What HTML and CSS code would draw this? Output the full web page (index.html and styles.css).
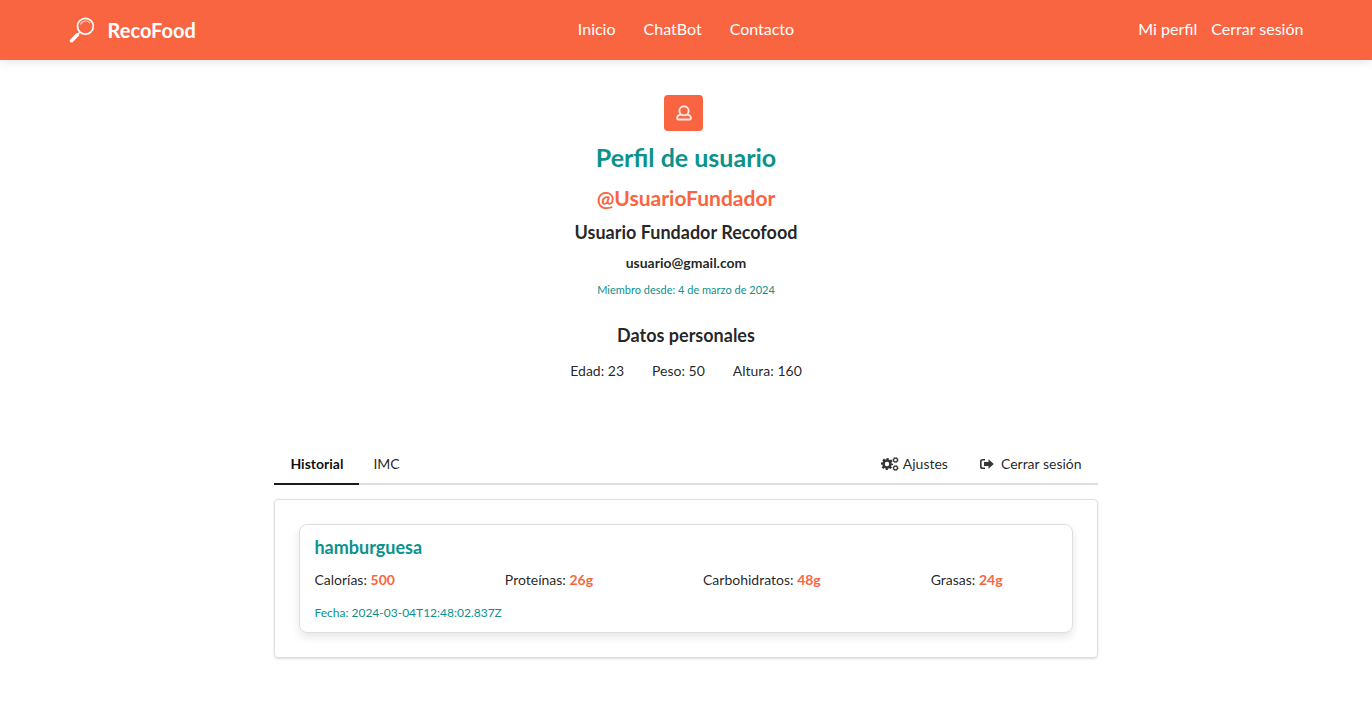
FILE: index.html
```html
<!DOCTYPE html>
<html lang="es">
<head>
<meta charset="utf-8">
<meta name="viewport" content="width=device-width, initial-scale=1">
<title>RecoFood</title>
<link rel="stylesheet" href="styles.css">
</head>
<body>
<header class="topbar">
  <a class="brand" href="#">
    <svg class="brand-icon" viewBox="0 0 26 26" fill="none" stroke="currentColor" aria-hidden="true">
      <circle cx="16.4" cy="9.3" r="7.900" stroke-width="1.700"/>
      <path d="M11.400 7.500a5.600 5.600 0 0 1 9.600-1.300" stroke-width="1.200" opacity=".7"/>
      <path d="M10.800 15.300L8.800 17.300" stroke-width="1.600"/>
      <path d="M8.300 17.800L2.600 23.700" stroke-width="3.600" stroke-linecap="round"/>
    </svg>
    <span>RecoFood</span>
  </a>
  <nav class="main-nav">
    <a href="#">Inicio</a>
    <a href="#">ChatBot</a>
    <a href="#">Contacto</a>
  </nav>
  <nav class="user-nav">
    <a href="#">Mi perfil</a>
    <a href="#">Cerrar sesión</a>
  </nav>
</header>
<main>
  <section class="profile">
    <button class="avatar" type="button" aria-label="Usuario">
      <svg viewBox="0 0 16 16" fill="none" stroke="currentColor" stroke-width="1.9" aria-hidden="true">
        <circle cx="8" cy="5.8" r="4.6"/>
        <path d="M4.8 9.6C2.4 10 1.1 11.2 1.1 13c0 1 .6 1.5 1.6 1.5h10.6c1 0 1.600-.5 1.600-1.500 0-1.800-1.300-3-3.700-3.400"/>
      </svg>
    </button>
    <h1 class="title">Perfil de usuario</h1>
    <h2 class="handle">@UsuarioFundador</h2>
    <h3 class="name">Usuario Fundador Recofood</h3>
    <h4 class="email">usuario@gmail.com</h4>
    <p class="since">Miembro desde: 4 de marzo de 2024</p>
    <h3 class="data-title">Datos personales</h3>
    <div class="data">
      <span>Edad: 23</span>
      <span>Peso: 50</span>
      <span>Altura: 160</span>
    </div>
  </section>
  <section class="panel">
    <nav class="tabs">
      <a class="tab active" href="#">Historial</a>
      <a class="tab" href="#">IMC</a>
      <a class="tab settings" href="#">
        <svg class="cogs" viewBox="0 0 18 14" fill="none" stroke="currentColor" aria-hidden="true">
          <circle cx="6" cy="7" r="3.500" stroke-width="2.600"/>
          <circle cx="6" cy="7" r="5.200" stroke-width="1.800" stroke-dasharray="2.200 1.884" stroke-dashoffset="1.100"/>
          <circle cx="14.500" cy="3" r="1.900" stroke-width="1.200"/>
          <circle cx="14.500" cy="3" r="2.700" stroke-width=".7" stroke-dasharray="1.100 1.020"/>
          <circle cx="14.500" cy="11" r="1.900" stroke-width="1.200"/>
          <circle cx="14.500" cy="11" r="2.700" stroke-width=".7" stroke-dasharray="1.100 1.020"/>
        </svg>
        Ajustes
      </a>
      <a class="tab logout" href="#">
        <svg class="exit" viewBox="0 0 14 14" fill="currentColor" aria-hidden="true">
          <path d="M5 2H2.600A2.600 2.600 0 0 0 0 4.600v4.800A2.600 2.600 0 0 0 2.600 12H5v-1.500H2.800A1.200 1.200 0 0 1 1.600 9.300V4.700a1.200 1.200 0 0 1 1.200-1.200H5z"/>
          <path d="M8.500 2.200L13.800 7l-5.300 4.800V9H4V5h4.500z"/>
        </svg>
        Cerrar sesión
      </a>
    </nav>
    <div class="segment">
      <article class="meal">
        <h3 class="meal-name">hamburguesa</h3>
        <div class="nutrients">
          <span>Calorías: <b>500</b></span>
          <span>Proteínas: <b>26g</b></span>
          <span>Carbohidratos: <b>48g</b></span>
          <span>Grasas: <b>24g</b></span>
        </div>
        <p class="date">Fecha: 2024-03-04T12:48:02.837Z</p>
      </article>
    </div>
  </section>
</main>
</body>
</html>
```
FILE: styles.css
```css
* { box-sizing: border-box; }
body {
  margin: 0;
  background: #fff;
  color: rgba(0, 0, 0, .87);
  font: 14px/20px Lato, "Liberation Sans", sans-serif;
}
a { color: inherit; text-decoration: none; }
h1, h2, h3, h4, p { margin: 0; }

.topbar {
  display: grid;
  grid-template-columns: 1fr auto 1fr;
  align-items: center;
  height: 60px;
  padding: 0 5%;
  background: #fa6541;
  color: #fff;
  font-size: 16px;
  line-height: 18px;
  box-shadow: 0 2px 10px rgba(0, 0, 0, .1);
}
.brand { display: flex; align-items: center; gap: 13px; font-size: 20px; line-height: 26px; font-weight: 700; }
.brand-icon { width: 26px; height: 26px; }
.main-nav { display: flex; gap: 28px; padding-bottom: 2px; }
.user-nav { display: flex; justify-content: flex-end; gap: 14px; padding-bottom: 2px; }

.profile {
  display: flex;
  flex-direction: column;
  align-items: center;
  padding-top: 35px;
  text-align: center;
}
.avatar {
  display: flex;
  align-items: center;
  justify-content: center;
  width: 39px;
  height: 36px;
  margin-right: 5px;
  padding: 0;
  border: 0;
  border-radius: 4px;
  background: #fa6541;
  color: rgba(255, 255, 255, .85);
}
.avatar svg { width: 16px; height: 16px; }
.title { margin-top: 10px; color: #0b928c; font-size: 25px; line-height: 32px; }
.handle { margin-top: 11px; color: #fa6541; font-size: 21px; line-height: 28px; }
.name { margin-top: 8px; font-size: 18px; line-height: 24px; }
.email { margin-top: 9px; font-size: 14px; line-height: 20px; }
.since { margin-top: 9px; color: #0b928c; font-size: 11px; line-height: 16px; }
.data-title { margin-top: 25px; font-size: 18px; line-height: 24px; }
.data { display: flex; gap: 28px; margin-top: 14px; }

.panel { width: 60%; margin: 64px auto 48px; }
.tabs { display: flex; border-bottom: 2px solid #dedede; }
.tab {
  display: flex;
  align-items: center;
  margin-bottom: -2px;
  padding: 9px 16px 9px 14px;
  border-bottom: 2px solid transparent;
}
.tab.active { padding-left: 16px; border-color: #1b1c1d; color: rgba(0, 0, 0, .95); font-weight: 700; }
.settings { gap: 4px; margin-left: auto; }
.logout { gap: 7px; padding-left: 16px; }
.cogs, .exit { height: 14px; opacity: .9; }
.cogs { width: 18px; }
.exit { width: 14px; }

.segment {
  margin-top: 14px;
  padding: 24px;
  border: 1px solid #dededf;
  border-radius: 4px;
  box-shadow: 0 1px 2px rgba(34, 36, 38, .15);
}
.meal {
  padding: 10px 14px;
  border: 1px solid #dededf;
  border-radius: 8px;
  box-shadow: 0 4px 8px rgba(0, 0, 0, .1);
}
.meal-name { color: #0b928c; font-size: 18px; line-height: 24px; }
.nutrients { display: flex; justify-content: space-between; margin-top: 11px; padding-right: 55px; }
.nutrients b { color: #fa6541; }
.date { margin-top: 14px; color: #0b928c; font-size: 12px; line-height: 18px; }
```
